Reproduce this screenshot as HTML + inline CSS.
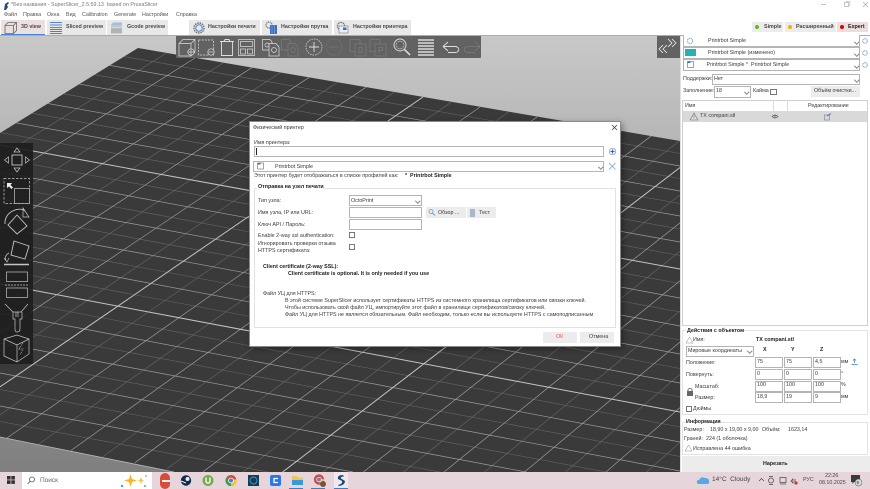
<!DOCTYPE html>
<html><head><meta charset="utf-8">
<style>
html,body{margin:0;padding:0;width:870px;height:489px;overflow:hidden;background:#fff}
body{font-family:"Liberation Sans","DejaVu Sans",sans-serif;font-size:5.35px;color:#3a3a3a}
#w{position:absolute;left:0;top:0;width:870px;height:489px;overflow:hidden;filter:blur(.3px)}
.t{position:absolute;line-height:10px;white-space:nowrap}
.b{font-weight:bold}
.r{position:absolute;box-sizing:border-box}
.inp{position:absolute;box-sizing:border-box;background:#fff;border:1px solid #b4b4b4}
.tab{position:absolute;top:20px;height:15px;background:#e8e8e8}
.lbl{font-weight:bold;color:#4a4a4a}
.chev{position:absolute;width:2.5px;height:2.5px;border-right:.6px solid #888;border-bottom:.6px solid #888;transform:rotate(45deg)}
svg{position:absolute;overflow:hidden}
</style></head><body><div id="w">
<!-- 3D canvas -->
<div class="r" style="left:0;top:35px;width:680px;height:437px;background:linear-gradient(#c8c8c8,#7f7f7f)"></div>
<svg style="left:0;top:0" width="680" height="472" viewBox="0 0 680 472">
<defs><clipPath id="bed"><polygon points="138,48 680,141 680,472 174,472 0,437 0,133"/></clipPath></defs>
<polygon points="138,48 680,141 680,472 174,472 0,437 0,133" fill="#3a3a3a"/>
<g clip-path="url(#bed)" fill="none">
<path stroke="#686868" stroke-width=".6" d="M0 35L680 153.5M0 58L680 178.5M0 82.5L680 203.5M0 107.5L680 229M0 132.5L680 255.5M0 158.5L680 283.5M0 185.5L680 312M0 213L680 340M0 241L680 368.5M0 269.5L680 397M0 298.5L680 427M0 328L680 456.5M0 358L606 472M0 389.5L440 472M0 421.5L268 472
M166.5 53L0 156.7M223.5 62.7L0 204.9M280.5 72.5L0 254.8M337.5 82.3L0 306.4M394.5 92L0 359.6M451.5 102L0 414.7M508.5 112L39 444M565.5 121.5L103 456.6M622.5 131.3L167 468.8M679.5 141L243 472M680 194.9L323 472M680 251.3L403.4 472M680 311L484.6 472M680 374.4L565.5 472M680 442.4L646.6 472"/>
<path stroke="#9c9c9c" stroke-width=".7" d="M0 46L680 166M0 70L680 191M0 95L680 216M0 120L680 242M0 172L680 298M0 199L680 326M0 227L680 354M0 255L680 383M0 313L680 442M0 343L680 471M0 373L526 472M0 406L353 472
M195 58L0 180.7M252 67.6L0 229.6M309 77.4L0 280.4M366 87.2L0 332.8M480 107L7 438M537 117L71 450.5M594 126.4L135 462.7M651 136.2L202.7 472M680 222.9L363.3 472M680 280.8L444 472M680 342L524.5 472M680 407.7L606 472"/>
<path stroke="#c4c4c4" stroke-width="1" d="M0 145L680 269M0 284L680 412M423 97L0 386.9M680 167.5L282.6 472"/>
</g>
<polyline points="0,437 174,472" stroke="#b8b8b8" stroke-width=".8" fill="none"/>
</svg>

<!-- title bar -->
<svg style="left:3px;top:2px" width="7" height="9"><path d="M1 8L2 2 5 0 6 1 4 3 5 5 3 8Z" fill="#1f4d7a"/></svg>
<div class="t" style="left:11px;top:0;color:#777">*Без названия - SuperSlicer_2.5.59.13&nbsp; based on PrusaSlicer</div>
<svg style="left:815px;top:0" width="55" height="11"><path d="M6 4.5H11" stroke="#aaa" stroke-width=".7"/><rect x="29.5" y="2.5" width="4" height="4" fill="none" stroke="#aaa" stroke-width=".7"/><path d="M31 2V1.5H35V5.5H34" fill="none" stroke="#aaa" stroke-width=".5"/><path d="M48 2L53 7M53 2L48 7" stroke="#aaa" stroke-width=".7"/></svg>
<!-- menu -->
<div class="t" style="left:4px;top:10px;color:#555">Файл</div>
<div class="t" style="left:23px;top:10px;color:#555">Правка</div>
<div class="t" style="left:47px;top:10px;color:#555">Окна</div>
<div class="t" style="left:66px;top:10px;color:#555">Вид</div>
<div class="t" style="left:82px;top:10px;color:#555">Calibration</div>
<div class="t" style="left:114px;top:10px;color:#555">Generate</div>
<div class="t" style="left:142px;top:10px;color:#555">Настройки</div>
<div class="t" style="left:176px;top:10px;color:#555">Справка</div>
<!-- tabs -->
<div class="tab" style="left:1px;width:44px;background:#ebe0df"></div>
<div class="r" style="left:1px;top:34px;width:44px;height:1.5px;background:#4a86d8"></div>
<svg style="left:4px;top:21px" width="14" height="13" fill="none" stroke="#666" stroke-width=".8"><path d="M1 4.5H9.5V12.5H1ZM1 4.5L4 1.5H12.5L9.5 4.5M12.5 1.5V9.5L9.5 12.5"/></svg>
<div class="t lbl" style="left:21px;top:22px">3D view</div>
<div class="tab" style="left:47px;width:59px"></div>
<svg style="left:49px;top:21px" width="14" height="13"><path d="M1 1.5H13" stroke="#5a85d0"/><path d="M1 4H13M1 6.5H13" stroke="#5a85d0"/><path d="M1 8.5H13M1 10.5H13M1 12.5H13" stroke="#777"/></svg>
<div class="t lbl" style="left:66px;top:22px">Sliced preview</div>
<div class="tab" style="left:107px;width:61px"></div>
<svg style="left:110px;top:21px" width="13" height="13"><path d="M1 4L3 1.5H12V4Z" fill="#a9bdd6"/><path d="M1 4H12V6.5H1Z" fill="#b8c8de"/><path d="M1 7H12V12.5H1Z" fill="#bbb"/><path d="M1 9H12M1 11H12" stroke="#999" stroke-width=".6"/></svg>
<div class="t lbl" style="left:127px;top:22px">Gcode preview</div>
<div class="tab" style="left:189px;width:71px"></div>
<svg style="left:192px;top:21px" width="14" height="14" fill="none"><circle cx="7" cy="7" r="5" stroke="#777" stroke-width="1.5" stroke-dasharray="1.6 .8"/><circle cx="7" cy="7" r="3.2" stroke="#4a86d8" stroke-width="1"/></svg>
<div class="t lbl" style="left:208px;top:22px">Настройки печати</div>
<div class="tab" style="left:262px;width:70px"></div>
<svg style="left:265px;top:21px" width="13" height="14"><circle cx="4" cy="4" r="3" fill="none" stroke="#777" stroke-width="1.2" stroke-dasharray="1.2 .6"/><rect x="5" y="4" width="7" height="9" fill="#3a6fc4"/><path d="M7 4V13M9.5 4V13" stroke="#9ab8e4" stroke-width=".5"/></svg>
<div class="t lbl" style="left:281px;top:22px">Настройки прутка</div>
<div class="tab" style="left:334px;width:77px"></div>
<svg style="left:336px;top:21px" width="14" height="14"><circle cx="5" cy="5" r="3.6" fill="none" stroke="#777" stroke-width="1.3" stroke-dasharray="1.3 .6"/><rect x="3" y="5" width="9" height="7" fill="#eef" stroke="#777" stroke-width=".6"/><rect x="7" y="6.5" width="3.5" height="2.5" fill="#2c6fd4"/></svg>
<div class="t lbl" style="left:353px;top:22px">Настройки принтера</div>
<!-- modes -->
<div class="r" style="left:752px;top:22px;width:31px;height:10px;background:#ececec"></div>
<div class="r" style="left:785px;top:22px;width:51px;height:10px;background:#ececec"></div>
<div class="r" style="left:837px;top:22px;width:31px;height:10px;background:#ecdedd"></div>
<div class="r" style="left:755px;top:24.5px;width:4px;height:4px;border-radius:50%;background:#5cc00e"></div>
<div class="r" style="left:788px;top:24.5px;width:4px;height:4px;border-radius:50%;background:#e8b800"></div>
<div class="r" style="left:839.5px;top:24.5px;width:4px;height:4px;border-radius:50%;background:#e00000"></div>
<div class="t lbl" style="left:764px;top:22px">Simple</div>
<div class="t lbl" style="left:796px;top:22px">Расширенный</div>
<div class="t b" style="left:848px;top:22px;color:#222">Expert</div>
<div class="r" style="left:0;top:35px;width:870px;height:.8px;background:#8eb0e2"></div>

<!-- top toolbar -->
<div class="r" style="left:176px;top:36px;width:305px;height:22px;background:#626262;border-radius:0 0 1px 1px"></div>
<svg style="left:0;top:0" width="870" height="489" fill="none" stroke="#e0e0e0" stroke-width=".7">
<path d="M179 43.5H191V56H179ZM179 43.5L183 39.5H195V52L191 56M195 39.5L191 43.5" stroke="#ddd"/><circle cx="191" cy="52" r="3.2" fill="#626262"/><path d="M188 52H194M191 49V55"/>
<rect x="198.5" y="40" width="15" height="15" stroke-dasharray="2 1.2"/><circle cx="211" cy="52" r="3.2" fill="#626262"/><path d="M208.5 52H213.5"/>
<path d="M220 41.5H234M221.5 42V55.5H232.5V42M224 41.5L225 39.5H229L230 41.5" stroke-width=".9"/>
<rect x="238.5" y="39.5" width="16" height="16"/><rect x="240.5" y="41.5" width="12" height="5"/><rect x="240.5" y="49" width="5" height="5"/><rect x="247.5" y="49" width="5" height="5"/>
<path d="M262.5 39.5H270L272 42V50H262.5Z"/><circle cx="267" cy="45" r="2"/><path d="M269 43.5H276L279 47V56H269Z" fill="#626262"/><circle cx="274" cy="50" r="2.4"/>
<g stroke="#7c7c7c"><path d="M281.5 39.5H289L291 42V50H281.5Z"/><path d="M288 43.5H295L298 47V56H288Z" fill="#626262"/><circle cx="293" cy="50" r="2.4"/>
<circle cx="334" cy="47" r="8" stroke-dasharray="1.5 1"/><path d="M329 47H339"/>
<rect x="350" y="39.5" width="10" height="12"/><rect x="355" y="44" width="11" height="12" fill="#626262"/><path d="M359 47.5H362V52.5H359Z"/>
<rect x="370" y="39.5" width="10" height="12"/><rect x="375" y="44" width="11" height="12" fill="#626262"/><path d="M379 53V47.5H382.5V50.5H379"/>
<path d="M480 46.5L475 42M480 46.5L475 51M480 46.5H468C463 46.5 463 52.5 468 52.5H475"/></g>
<circle cx="314" cy="47" r="8" stroke-dasharray="1.5 1"/><path d="M309 47H319M314 42V52" stroke-width=".9"/>
<circle cx="400" cy="45" r="6" stroke-width=".9"/><circle cx="400" cy="45" r="4" stroke-width=".5"/><path d="M404.5 49.5L410 55" stroke-width="1.5"/>
<path d="M418 40H434M418 43H434M418 46H434M418 49H434M418 52H434M418 55H434" stroke="#f4f4f4" stroke-width="1.3"/>
<path d="M443 46.5L448 42M443 46.5L448 51M443 46.5H455C460 46.5 460 52.5 455 52.5H448" stroke-width=".9"/>
</svg>
<!-- collapse -->
<div class="r" style="left:657px;top:36px;width:23px;height:22px;background:#626262"></div>
<svg style="left:657px;top:36px" width="23" height="22" fill="none" stroke="#f0f0f0" stroke-width=".8"><path d="M11 3L15 7L11 11M15 3L19 7L15 11M10 9L6 13L10 17M6 9L2 13L6 17"/></svg>

<!-- left toolbar -->
<div class="r" style="left:0;top:143px;width:33px;height:221px;background:rgba(30,30,30,.92)"></div>
<svg style="left:0;top:140px" width="34" height="225" fill="none" stroke="#c4c4c4" stroke-width=".7">
<rect x="12" y="15" width="10" height="10" stroke-width=".9"/><path d="M17 8L14 12H20ZM17 32L14 28H20ZM4.5 20L8.5 17V23ZM29.5 20L25.5 17V23Z"/>
<rect x="4" y="38.5" width="25.5" height="25" stroke-dasharray="2.5 1.5"/><rect x="14.5" y="48.5" width="15" height="15" fill="#212121"/><path d="M7 43L12 43 10.5 45 13 47.5 11.5 49 9 46.5 7 48Z" fill="#eee" stroke="none"/>
<path d="M5 84C4 72 19 66 25 71" stroke-width=".9"/><path d="M23 68L29 77H23Z"/><path d="M17 75L27 86 17 94 8 85Z" stroke-width=".9"/>
<path d="M14 101L29 106 25 119 11 115Z" stroke-width=".9"/><path d="M9 113C5 115 5 118 6 120M4 118L7 122 9 118"/><path d="M4 124.5H29" stroke-width="1.6"/>
<rect x="6.5" y="132" width="21" height="9.5"/><path d="M5 145H29" stroke-dasharray="2 1"/><rect x="6.5" y="148" width="21" height="9.5"/>
<path d="M5 164L13 172H21L28 164"/><path d="M13 172V179H15V189Q15 192 17 192Q20 192 20 189V179H22V172M16 172V177M18 172V177"/>
<path d="M4 199L17 195 29 199V214L17 222 4 216ZM4 199L17 205 29 199M17 205V222"/><path d="M23 203L19 209H23L20 215" stroke-dasharray="1 .8"/>
</svg>

<!-- right panel -->
<div class="r" style="left:680px;top:36px;width:190px;height:436px;background:#fff"></div>
<div class="r" style="left:680px;top:36px;width:1px;height:436px;background:#e0e0e0"></div>
<div class="inp" style="left:683px;top:35px;width:177px;height:11.5px;border-top:0"></div>
<div class="inp" style="left:683px;top:47px;width:177px;height:11.5px"></div>
<div class="inp" style="left:683px;top:59px;width:177px;height:11.5px"></div>
<svg style="left:685px;top:37px" width="10" height="10"><circle cx="5" cy="4" r="2.6" fill="none" stroke="#8aa8d8" stroke-width="1.2" stroke-dasharray="1.2 .6"/></svg>
<div class="r" style="left:685px;top:49px;width:11px;height:7px;background:#26b0b0"></div>
<svg style="left:687px;top:60px" width="9" height="9"><rect x=".5" y="1.5" width="6" height="6" fill="#fff" stroke="#666" stroke-width=".6"/><rect x=".5" y="1.5" width="3" height="1.5" fill="#3a6fc4"/></svg>
<div class="t" style="left:708px;top:36px">Printrbot Simple</div>
<div class="t" style="left:708px;top:48px">Printrbot Simple (изменено)</div>
<div class="t" style="left:706.5px;top:60px">Printrbot Simple *&nbsp; Printrbot Simple</div>
<div class="chev" style="left:855px;top:40px"></div><div class="chev" style="left:855px;top:52px"></div><div class="chev" style="left:855px;top:64px"></div>
<svg style="left:861px;top:36px" width="9" height="36" fill="none" stroke="#7ea2d4" stroke-width="1"><circle cx="4" cy="5" r="2.3" stroke-dasharray="1.1 .5"/><circle cx="4" cy="17" r="2.3" stroke-dasharray="1.1 .5"/><circle cx="4" cy="29" r="2.3" stroke-dasharray="1.1 .5"/></svg>
<div class="t" style="left:683px;top:74px">Поддержки:</div>
<div class="inp" style="left:712px;top:73.5px;width:148px;height:11.5px"></div>
<div class="t" style="left:714px;top:74px">Нет</div>
<div class="chev" style="left:855px;top:77.5px"></div>
<div class="t" style="left:683px;top:86px">Заполнение:</div>
<div class="inp" style="left:714px;top:86px;width:37px;height:11.5px"></div>
<div class="t" style="left:716px;top:86px">18</div>
<div class="chev" style="left:745px;top:89.5px"></div>
<div class="t" style="left:753px;top:86px">Кайма</div>
<div class="inp" style="left:770px;top:88.5px;width:6.5px;height:6.5px;border-color:#777"></div>
<div class="r" style="left:811px;top:86px;width:49px;height:10.5px;background:#ececec"></div>
<div class="t" style="left:814px;top:86px">Объём очистки...</div>
<div class="r" style="left:682px;top:100px;width:186px;height:225.5px;border:1px solid #cfcfcf"></div>
<div class="r" style="left:772.5px;top:100px;width:.8px;height:11px;background:#ddd"></div>
<div class="r" style="left:786.5px;top:100px;width:.8px;height:11px;background:#ddd"></div>
<div class="r" style="left:683px;top:110.5px;width:184px;height:.7px;background:#e4e4e4"></div>
<div class="t" style="left:685px;top:100.5px">Имя</div>
<div class="t" style="left:808px;top:100.5px">Редактирование</div>
<div class="r" style="left:683px;top:111px;width:184px;height:11px;background:#d9d9d9"></div>
<svg style="left:690px;top:111px" width="110" height="11" fill="none" stroke="#777" stroke-width=".6"><path d="M4 2L8 9H0Z"/><path d="M4 4V7"/><path d="M82 5.5Q85 2.5 88 5.5Q85 8.5 82 5.5Z" stroke="#555"/><circle cx="85" cy="5.5" r=".9"/></svg>
<svg style="left:824px;top:112px" width="9" height="9" fill="none"><rect x=".5" y="3" width="5" height="5" stroke="#88a" stroke-width=".7"/><path d="M3 4L7 1.5" stroke="#2f6fd0" stroke-width="1"/></svg>
<div class="t" style="left:700px;top:111px">TX compani.stl</div>

<!-- object manipulation -->
<div class="r" style="left:682px;top:330px;width:186px;height:85px;border:.7px solid #e2e2e2"></div>
<div class="r" style="left:686px;top:327px;width:54px;height:6px;background:#fff"></div>
<div class="t b" style="left:687px;top:326px;color:#222">Действия с объектом</div>
<svg style="left:686px;top:336px" width="8" height="8" fill="none" stroke="#888" stroke-width=".5"><path d="M3.5 1L7 7H0Z"/></svg>
<div class="t" style="left:693px;top:335px">Имя:</div>
<div class="t b" style="left:756px;top:335px;color:#222">TX compani.stl</div>
<div class="inp" style="left:686px;top:346px;width:68px;height:11px"></div>
<div class="t" style="left:688px;top:346px">Мировые координаты</div>
<div class="chev" style="left:748px;top:349px"></div>
<div class="t b" style="left:763px;top:345px;color:#222">X</div>
<div class="t b" style="left:791px;top:345px;color:#222">Y</div>
<div class="t b" style="left:820px;top:345px;color:#222">Z</div>
<div class="t" style="left:686px;top:358px">Положение:</div>
<div class="t" style="left:686px;top:370px">Повернуть:</div>
<div class="t" style="left:695px;top:382px">Масштаб:</div>
<div class="t" style="left:695px;top:393px">Размер:</div>
<svg style="left:686px;top:387px" width="8" height="10"><path d="M2 4V2.5Q4 0 6 2.5V4" fill="none" stroke="#555" stroke-width=".8"/><rect x="1" y="4" width="6" height="5" fill="#666"/></svg>
<div class="inp" style="left:755px;top:357px;width:27.5px;height:10.5px"></div><div class="inp" style="left:784px;top:357px;width:27.5px;height:10.5px"></div><div class="inp" style="left:813px;top:357px;width:27.5px;height:10.5px"></div>
<div class="inp" style="left:755px;top:369px;width:27.5px;height:10.5px"></div><div class="inp" style="left:784px;top:369px;width:27.5px;height:10.5px"></div><div class="inp" style="left:813px;top:369px;width:27.5px;height:10.5px"></div>
<div class="inp" style="left:755px;top:381px;width:27.5px;height:10.5px"></div><div class="inp" style="left:784px;top:381px;width:27.5px;height:10.5px"></div><div class="inp" style="left:813px;top:381px;width:27.5px;height:10.5px"></div>
<div class="inp" style="left:755px;top:392px;width:27.5px;height:10.5px"></div><div class="inp" style="left:784px;top:392px;width:27.5px;height:10.5px"></div><div class="inp" style="left:813px;top:392px;width:27.5px;height:10.5px"></div>
<div class="t" style="left:757px;top:357px">75</div><div class="t" style="left:786px;top:357px">75</div><div class="t" style="left:815px;top:357px">4,5</div>
<div class="t" style="left:757px;top:369px">0</div><div class="t" style="left:786px;top:369px">0</div><div class="t" style="left:815px;top:369px">0</div>
<div class="t" style="left:757px;top:380px">100</div><div class="t" style="left:786px;top:380px">100</div><div class="t" style="left:815px;top:380px">100</div>
<div class="t" style="left:757px;top:392px">18,9</div><div class="t" style="left:786px;top:392px">19</div><div class="t" style="left:815px;top:392px">9</div>
<div class="t" style="left:841px;top:357px">мм</div><div class="t" style="left:841px;top:369px">°</div><div class="t" style="left:841px;top:380px">%</div><div class="t" style="left:841px;top:392px">мм</div>
<svg style="left:851px;top:358px" width="8" height="8" fill="none"><path d="M.5 6.5H6.5M3.5 5V1M2 2.5L3.5 1L5 2.5" stroke="#3a78d0" stroke-width=".7"/></svg>
<div class="inp" style="left:686px;top:405.5px;width:6px;height:6px;border-color:#777"></div>
<div class="t" style="left:693px;top:403.5px">Дюймы</div>

<!-- info -->
<div class="r" style="left:682px;top:422px;width:186px;height:33px;border:.7px solid #e2e2e2"></div>
<div class="r" style="left:686px;top:419px;width:30px;height:6px;background:#fff"></div>
<div class="t b" style="left:686px;top:417px;color:#222">Информация</div>
<div class="t" style="left:684px;top:424.5px">Размер:</div>
<div class="t" style="left:710px;top:424.5px">18,90 x 19,00 x 9,00</div>
<div class="t" style="left:762px;top:424.5px">Объём:</div>
<div class="t" style="left:788px;top:424.5px">1623,14</div>
<div class="t" style="left:684px;top:434px">Граней:</div>
<div class="t" style="left:706px;top:434px">224 (1 оболочка)</div>
<svg style="left:685px;top:444px" width="8" height="8" fill="none" stroke="#888" stroke-width=".5"><path d="M3.5 1L7 7H0Z"/></svg>
<div class="t" style="left:693px;top:443.5px">Исправлена 44 ошибка</div>
<div class="r" style="left:682px;top:456px;width:188px;height:16px;background:#ececec"></div>
<div class="t b" style="left:763px;top:459px;color:#222">Нарезать</div>

<!-- dialog -->
<div class="r" style="left:249px;top:121px;width:371.5px;height:226px;background:#fff;border:1px solid #8a8a8a;box-shadow:2px 2px 6px rgba(0,0,0,.35)"></div>
<div class="t" style="left:253px;top:123px">Физический принтер</div>
<svg style="left:611px;top:124px" width="7" height="7"><path d="M1 1L6 6M6 1L1 6" stroke="#444" stroke-width=".8"/></svg>
<div class="t" style="left:254px;top:137.5px">Имя принтера:</div>
<div class="inp" style="left:254px;top:146px;width:350px;height:11px"></div>
<div class="r" style="left:256px;top:148px;width:.8px;height:7px;background:#222"></div>
<svg style="left:608px;top:147px" width="9" height="9"><circle cx="4.5" cy="4.5" r="3.3" fill="#e8eefa" stroke="#8aa0c8" stroke-width=".7"/><path d="M2.5 4.5H6.5M4.5 2.5V6.5" stroke="#2f5fc0" stroke-width=".9"/></svg>
<div class="inp" style="left:253px;top:161px;width:351px;height:11px"></div>
<svg style="left:257px;top:162px" width="9" height="9"><rect x=".5" y="1" width="6" height="6" fill="#fff" stroke="#666" stroke-width=".6"/><rect x=".5" y="1" width="3" height="1.5" fill="#3a6fc4"/></svg>
<div class="t" style="left:275px;top:161.5px">Printrbot Simple</div>
<div class="chev" style="left:599px;top:164.5px"></div>
<svg style="left:608px;top:162px" width="9" height="9"><path d="M1 1L7.5 7.5M7.5 1L1 7.5" stroke="#8fb4ea" stroke-width=".9"/></svg>
<div class="t" style="left:254px;top:171px">Этот принтер будет отображаться в списке профилей как:</div>
<div class="t b" style="left:405px;top:171px;color:#222">*&nbsp; Printrbot Simple</div>
<div class="r" style="left:254px;top:187.5px;width:362px;height:140px;border:.7px solid #e2e2e2"></div>
<div class="r" style="left:257px;top:184px;width:66px;height:6px;background:#fff"></div>
<div class="t b" style="left:258px;top:182px;color:#222">Отправка на узел печати</div>
<div class="t" style="left:258px;top:195.5px">Тип узла:</div>
<div class="inp" style="left:349px;top:195px;width:73px;height:11px"></div>
<div class="t" style="left:351px;top:195.5px">OctoPrint</div>
<div class="chev" style="left:416px;top:198.5px"></div>
<div class="t" style="left:258px;top:207.5px">Имя узла, IP или URL:</div>
<div class="inp" style="left:349px;top:207px;width:73px;height:11px"></div>
<div class="r" style="left:426px;top:207px;width:39.5px;height:11px;background:#ececec"></div>
<svg style="left:428px;top:208px" width="9" height="9"><circle cx="3" cy="3.5" r="2" fill="none" stroke="#6a9ad8" stroke-width=".8"/><path d="M4.5 5L7 7.5" stroke="#6a9ad8" stroke-width=".9"/></svg>
<div class="t" style="left:438px;top:207.5px">Обзор ...</div>
<div class="r" style="left:467px;top:207px;width:29px;height:11px;background:#ececec"></div>
<div class="r" style="left:470px;top:208.5px;width:5px;height:8px;background:#a8b8cc"></div>
<div class="t" style="left:479px;top:207.5px">Тест</div>
<div class="t" style="left:258px;top:219.5px">Ключ API / Пароль:</div>
<div class="inp" style="left:349px;top:219px;width:73px;height:11px"></div>
<div class="t" style="left:258px;top:230.5px">Enable 2-way ssl authentication:</div>
<div class="inp" style="left:349px;top:232px;width:6px;height:6px;border-color:#777"></div>
<div class="t" style="left:258px;top:239px">Игнорировать проверки отзыва</div>
<div class="t" style="left:258px;top:245.5px">HTTPS сертификата:</div>
<div class="inp" style="left:349px;top:244px;width:6px;height:6px;border-color:#777"></div>
<div class="t b" style="left:263px;top:262px;color:#222">Client certificate (2-way SSL):</div>
<div class="t b" style="left:288px;top:269px;color:#222">Client certificate is optional. It is only needed if you use</div>
<div class="t" style="left:263px;top:289px">Файл УЦ для HTTPS:</div>
<div class="t" style="left:285px;top:296px">В этой системе SuperSlicer использует сертификаты HTTPS из системного хранилища сертификатов или связки ключей.</div>
<div class="t" style="left:285px;top:303px">Чтобы использовать свой файл УЦ, импортируйте этот файл в хранилище сертификатов/связку ключей.</div>
<div class="t" style="left:285px;top:310px">Файл УЦ для HTTPS не является обязательным. Файл необходим, только если вы используете HTTPS с самоподписанным</div>
<div class="r" style="left:543px;top:332px;width:34px;height:10.5px;background:#ececec"></div>
<div class="t" style="left:556px;top:332px;color:#e0603a">ОК</div>
<div class="r" style="left:580px;top:332px;width:34px;height:10.5px;background:#ececec"></div>
<div class="t" style="left:589px;top:332px">Отмена</div>

<!-- taskbar -->
<div class="r" style="left:0;top:472px;width:870px;height:17px;background:#e6d6db"></div>
<svg style="left:7px;top:476px" width="9" height="9" fill="#333"><rect width="3.6" height="3.6"/><rect x="4.3" width="3.6" height="3.6"/><rect y="4.3" width="3.6" height="3.6"/><rect x="4.3" y="4.3" width="3.6" height="3.6"/></svg>
<div class="r" style="left:22px;top:472px;width:130px;height:17px;background:#fff"></div>
<svg style="left:27px;top:476px" width="9" height="9" fill="none" stroke="#555" stroke-width=".8"><circle cx="5" cy="3.5" r="2.5"/><path d="M3 5.5L.5 8"/></svg>
<div class="t" style="left:40px;top:475.5px;font-size:6.5px;color:#666">Поиск</div>
<svg style="left:120px;top:472px" width="30" height="17"><path d="M10.5 2L12 7 17 8.5 12 10 10.5 15 9 10 4 8.5 9 7Z" fill="#f8b81c"/><path d="M21 5L22 7.5 24 8.5 22 9.5 21 12 20 9.5 18 8.5 20 7.5Z" fill="#f7c64a"/><circle cx="2" cy="14" r="1.2" fill="#3aa0ee"/><circle cx="25" cy="14" r="1" fill="#40b0e8"/><circle cx="26" cy="4" r=".8" fill="#e85a5a"/></svg>
<svg style="left:155px;top:472px" width="200" height="17">
<path d="M5 6A5 5 0 0 1 15 6L15 12A5 5 0 0 1 5 12Z" fill="#d84a3a"/><path d="M7 8H15V10H7Z" fill="#f0f0f0"/>
<circle cx="31" cy="8.5" r="5.2" fill="#14294a"/><circle cx="32.5" cy="7" r="2" fill="#e8eef5"/><path d="M26 9L31 11" stroke="#e8eef5"/>
<circle cx="53" cy="8.5" r="5.5" fill="#78a94a"/><path d="M51 5.5V9Q51 11 53 11Q55 11 55 9V5.5" fill="none" stroke="#fff" stroke-width="1.3"/>
<circle cx="76" cy="8.5" r="5.5" fill="#e04a3a"/><path d="M76 8.5L81.3 7A5.5 5.5 0 0 1 76 14Z" fill="#f8c820"/><path d="M76 8.5L76 14A5.5 5.5 0 0 1 71.5 5.5Z" fill="#3aa050"/><circle cx="76" cy="8.5" r="2.4" fill="#3a7ee0" stroke="#fff" stroke-width=".8"/>
<rect x="93" y="3" width="11" height="11" fill="#1c3a50"/><circle cx="98.5" cy="8.5" r="3.5" fill="none" stroke="#2ea0e0" stroke-width=".9"/>
<rect x="115" y="3" width="11" height="11" rx="2" fill="#2a78e8"/><path d="M123 6.5H119V10.5H123" fill="none" stroke="#fff" stroke-width="1.3"/>
<path d="M137 4H142L143 5.5H148V13H137Z" fill="#f3c352"/><rect x="137" y="8" width="11" height="5" fill="#3a9ad8"/>
<circle cx="164" cy="7.5" r="5.2" fill="#d84a3a"/><path d="M164 7.5L169 7A5 5 0 0 1 165 12.5Z" fill="#f5c518"/><circle cx="164" cy="7.5" r="2.3" fill="#4a86e8" stroke="#fff" stroke-width=".7"/><circle cx="168" cy="12" r="3" fill="#7a5040"/>
<rect x="179" y="0" width="14" height="17" fill="#f2e8ec"/><path d="M188 3Q182 3 183 7L187 9Q188 12 183 13L184 14Q190 13 190 9L186 6.5Q185 4.5 189 4.5Z" fill="#184878"/>
</svg>
<div class="r" style="left:289px;top:487.5px;width:14px;height:1.5px;background:#3a80c8"></div>
<div class="r" style="left:311px;top:487.5px;width:14px;height:1.5px;background:#3a80c8"></div>
<div class="r" style="left:334px;top:487.5px;width:14px;height:1.5px;background:#3a80c8"></div>
<svg style="left:695px;top:474px" width="17" height="13"><path d="M2 9Q1 6 4 6Q6 2 10 4Q14 4 14 7Q15 10 12 10H4Q3 10 2 9Z" fill="#58a8e8"/></svg>
<div class="t" style="left:712px;top:475px;font-size:6.5px;color:#444">14°C&nbsp; Cloudy</div>
<svg style="left:758px;top:474px" width="45" height="13" fill="none" stroke="#444" stroke-width=".7"><path d="M1 7L3.5 4.5L6 7"/><circle cx="13" cy="6.5" r="2.5"/><path d="M11 2.5H15M11 10.5H15"/><rect x="22" y="3.5" width="6" height="5"/><path d="M22 10H28"/><path d="M33 7L35 5V9ZM37 5V9"/><circle cx="38" cy="9" r="1.6" fill="#d83030" stroke="none"/></svg>
<div class="t" style="left:803px;top:475px;color:#444">РУС</div>
<div class="t" style="left:825px;top:470.5px;color:#444">22:26</div>
<div class="t" style="left:819px;top:478px;color:#444">08.10.2025</div>
<svg style="left:850px;top:474px" width="14" height="14"><path d="M1 1H10V8H4L2.5 10V8H1Z" fill="#3a3a3a"/><circle cx="8.5" cy="8.5" r="3.4" fill="#ddd" stroke="#666" stroke-width=".6"/></svg>
<div class="t" style="left:856.5px;top:477.5px;font-size:4.5px;color:#222">9</div>
</div></body></html>
